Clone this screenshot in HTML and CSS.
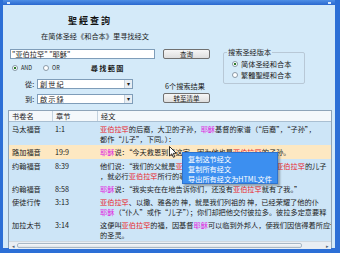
FILE: index.html
```html
<!DOCTYPE html>
<html lang="zh">
<head>
    <meta charset="UTF-8">
    <title>聖經查詢</title>
    <link rel="stylesheet" href="styles.css">
</head>
<body>
<div class="window">
    <div class="titlebar"><span class="tb-dot"></span><span class="tb-dot"></span></div>
    <div class="client">
        <h1 class="title">聖經查詢</h1>
        <p class="subtitle">在简体圣经《和合本》里寻找经文</p>

        <div class="form-area">
            <div class="col-left">
                <div class="textbox">"亚伯拉罕" "耶稣"</div>
                <div class="radio-row">
                    <span class="radio checked"></span><span class="radio-label">AND</span>
                    <span class="radio gap"></span><span class="radio-label">OR</span>
                    <span class="range-title">尋找範圍</span>
                </div>
                <div class="pick-row">
                    <span class="pick-label">從:</span>
                    <div class="combo"><span class="combo-text">創世紀</span><span class="combo-btn">▾</span></div>
                </div>
                <div class="pick-row">
                    <span class="pick-label">到:</span>
                    <div class="combo"><span class="combo-text">啟示錄</span><span class="combo-btn">▾</span></div>
                </div>
            </div>

            <div class="col-mid">
                <div class="btn">查询</div>
                <div class="result-count">6个搜索结果</div>
                <div class="btn">转至清单</div>
            </div>

            <fieldset class="version-box">
                <legend>搜索圣经版本</legend>
                <div class="version-opt"><span class="radio checked"></span>简体圣经和合本</div>
                <div class="version-opt"><span class="radio"></span>繁體聖經和合本</div>
            </fieldset>
        </div>

        <div class="grid">
            <div class="grid-head">
                <div class="cell">书卷名</div>
                <div class="cell">章节</div>
                <div class="cell">经文</div>
            </div>
            <div class="grid-row">
                <div class="cell">马太福音</div>
                <div class="cell">1:1</div>
                <div class="cell verse"><span class="hl-a">亚伯拉罕</span>的后裔，大卫的子孙，<span class="hl-j">耶稣</span>基督的家谱（“后裔”，“子孙”，<br>都作“儿子”，下同。）：</div>
            </div>
            <div class="grid-row selected">
                <div class="cell">路加福音</div>
                <div class="cell">19:9</div>
                <div class="cell verse"><span class="hl-j">耶稣</span>说：“今天救恩到了这家，因为他也是<span class="hl-a">亚伯拉罕</span>的子孙。</div>
            </div>
            <div class="grid-row">
                <div class="cell">约翰福音</div>
                <div class="cell">8:39</div>
                <div class="cell verse">他们说：“我们的父就是<span class="hl-a">亚伯拉罕</span>。”<span class="hl-j">耶稣</span>说：“你们若是<span class="hl-a">亚伯拉罕</span>的儿子<br>，就必行<span class="hl-a">亚伯拉罕</span>所行的事。</div>
            </div>
            <div class="grid-row">
                <div class="cell">约翰福音</div>
                <div class="cell">8:58</div>
                <div class="cell verse"><span class="hl-j">耶稣</span>说：“我实实在在地告诉你们，还没有<span class="hl-a">亚伯拉罕</span>就有了我。”</div>
            </div>
            <div class="grid-row">
                <div class="cell">使徒行传</div>
                <div class="cell">3:13</div>
                <div class="cell verse"><span class="hl-a">亚伯拉罕</span>、以撒、雅各的 神，就是我们列祖的 神，已经荣耀了他的仆<br><span class="hl-j">耶稣</span>（“仆人”或作“儿子”）；你们却把他交付彼拉多。彼拉多定意要释</div>
            </div>
            <div class="grid-row">
                <div class="cell">加拉太书</div>
                <div class="cell">3:14</div>
                <div class="cell verse">这便叫<span class="hl-a">亚伯拉罕</span>的福，因基督<span class="hl-j">耶稣</span>可以临到外邦人，使我们因信得着所应许<br>的圣灵。</div>
            </div>
            <div class="grid-fill"></div>
            <div class="hscroll">
                <span class="sb-arrow">◂</span>
                <span class="sb-thumb"></span>
                <span class="sb-track"></span>
                <span class="sb-arrow">▸</span>
            </div>
        </div>
    </div>

    <!-- right-click menu over the list -->
    <div class="ctx-menu">
        <div class="ctx-item">复制这节经文</div>
        <div class="ctx-item">复制所有经文</div>
        <div class="ctx-item">导出所有经文为HTML文件</div>
    </div>
    <svg class="cursor" width="8" height="12" viewBox="0 0 8 12">
        <path d="M0.5 0.5 L0.5 10 L2.8 7.8 L4.4 11.3 L5.8 10.7 L4.3 7.3 L7.3 7.3 Z" fill="#fff" stroke="#000" stroke-width="0.8"/>
    </svg>
</div>
</body>
</html>
```

FILE: styles.css
```css
body {
    margin: 0;
    font-family: "Noto Sans CJK SC", "Liberation Sans", sans-serif;
    font-size: 7.2px;
    color: #1a1a1a;
    overflow: hidden;
}

.window {
    position: relative;
    width: 340px;
    height: 253px;
    box-sizing: border-box;
    display: flex;
    flex-direction: column;
    background: #2c6fd6;
    padding: 0 5px 5px 3px;
}

.titlebar {
    height: 5px;
    display: flex;
    justify-content: space-between;
    align-items: center;
    padding: 0 4px;
    background: linear-gradient(#4f8fe6, #2a68cf);
}

.tb-dot {
    width: 3px;
    height: 2px;
    background: #dbe9fb;
}

.client {
    flex: 1;
    display: flex;
    flex-direction: column;
    background: #d4eaf9;
    padding: 10px 3px 0 5px;
    min-height: 0;
}

.title {
    margin: 0;
    width: 164px;
    text-align: center;
    font-size: 9px;
    line-height: 12px;
    font-weight: bold;
    letter-spacing: 2px;
    color: #111;
}

.subtitle {
    margin: 4px 0 0;
    width: 174px;
    text-align: center;
    line-height: 10px;
}

.form-area {
    display: flex;
    margin-top: 7px;
    padding-left: 2px;
}

.col-left {
    width: 145px;
    padding-top: 1px;
    display: flex;
    flex-direction: column;
}

.textbox {
    height: 10px;
    box-sizing: border-box;
    border: 1px solid #7f9db9;
    background: #fff;
    padding-left: 1px;
    line-height: 8px;
    white-space: nowrap;
}

.radio-row {
    display: flex;
    align-items: center;
    height: 10px;
    margin-top: 4px;
    padding-left: 2px;
    font-size: 5.5px;
}

.radio {
    display: inline-block;
    width: 4px;
    height: 4px;
    border: 1px solid #8a9aa8;
    border-radius: 50%;
    background: #fff;
    margin-right: 3px;
    flex-shrink: 0;
    box-sizing: content-box;
}

.radio.checked {
    background: radial-gradient(circle, #2a7a2a 45%, #fff 55%);
}

.radio.gap {
    margin-left: 11px;
}

.range-title {
    margin-left: 31px;
    font-size: 7.2px;
    font-weight: bold;
    letter-spacing: 1.3px;
}

.pick-row {
    display: flex;
    align-items: center;
    height: 10px;
    margin-top: 6px;
}

.pick-row + .pick-row {
    margin-top: 5px;
}

.pick-label {
    width: 12px;
    padding-left: 15px;
}

.combo {
    width: 96px;
    height: 10px;
    box-sizing: border-box;
    border: 1px solid #7f9db9;
    background: #fff;
    display: flex;
    align-items: center;
}

.combo-text {
    flex: 1;
    padding-left: 2px;
    letter-spacing: 1px;
    line-height: 8px;
}

.combo-btn {
    width: 7px;
    height: 8px;
    line-height: 8px;
    text-align: center;
    font-size: 6px;
    background: #e8eef4;
    border-left: 1px solid #c5d2de;
}

.col-mid {
    width: 47px;
    margin-left: 8px;
    padding-top: 1px;
    display: flex;
    flex-direction: column;
}

.btn {
    height: 10px;
    box-sizing: border-box;
    border: 1px solid #707070;
    border-radius: 2px;
    background: linear-gradient(#f6f6f6, #dedede);
    text-align: center;
    line-height: 8px;
    font-size: 6.5px;
}

.result-count {
    margin-top: 22px;
    margin-left: 2px;
    line-height: 10px;
    white-space: nowrap;
}

.col-mid .btn:last-child {
    margin-top: 2px;
}

.version-box {
    width: 82px;
    height: 36px;
    box-sizing: border-box;
    margin: 0 0 0 13px;
    padding: 2px 0 0 8px;
    border: 1px solid #b8c8d6;
    border-radius: 2px;
}

.version-box legend {
    padding: 0 1px;
    margin-left: -5px;
    line-height: 9px;
}

.version-opt {
    display: flex;
    align-items: center;
    height: 10px;
    margin-bottom: 1px;
}

.grid {
    flex: 1;
    display: flex;
    flex-direction: column;
    margin-top: 6px;
    border: 1px solid #8ea4b8;
    border-bottom: none;
    background: #cde5f7;
    min-height: 0;
}

.grid-head,
.grid-row {
    display: grid;
    grid-template-columns: 43px 45px 1fr;
}

.grid-head {
    height: 10px;
    background: #f4f8fb;
    border-bottom: 1px solid #a9bfd2;
    line-height: 10px;
}

.grid-head .cell + .cell {
    border-left: 1px solid #c3d2df;
}

.cell {
    padding-left: 3px;
    white-space: nowrap;
    overflow: hidden;
}

.grid-row {
    padding: 1.5px 0;
    line-height: 10px;
}

.grid-row.selected {
    background: #fde8c2;
    padding: 2px 0;
}

.hl-a {
    color: #e8262c;
}

.hl-j {
    color: #e01ee0;
}

.grid-fill {
    flex: 1;
}

.hscroll {
    height: 7px;
    display: flex;
    align-items: center;
    background: #e9eef3;
    border-top: 1px solid #cfd8e0;
    margin-bottom: 1px;
}

.sb-arrow {
    width: 8px;
    text-align: center;
    font-size: 5px;
    color: #50657a;
}

.sb-thumb {
    width: 285px;
    height: 5px;
    border: 1px solid #a9b8c6;
    border-radius: 2px;
    box-sizing: border-box;
    background: linear-gradient(#f8f9fa, #dde3e9);
}

.sb-track {
    flex: 1;
}

.ctx-menu {
    position: absolute;
    left: 182px;
    top: 152px;
    width: 96px;
    height: 32px;
    box-sizing: border-box;
    padding-top: 1px;
    background: #3c8ff0;
    border: 1px solid #2d72cf;
    box-shadow: 2px 2px 2px rgba(0, 0, 0, 0.3);
    color: #fff;
}

.ctx-item {
    line-height: 10px;
    padding-left: 5px;
    white-space: nowrap;
}

.cursor {
    position: absolute;
    left: 169px;
    top: 146px;
}
```
